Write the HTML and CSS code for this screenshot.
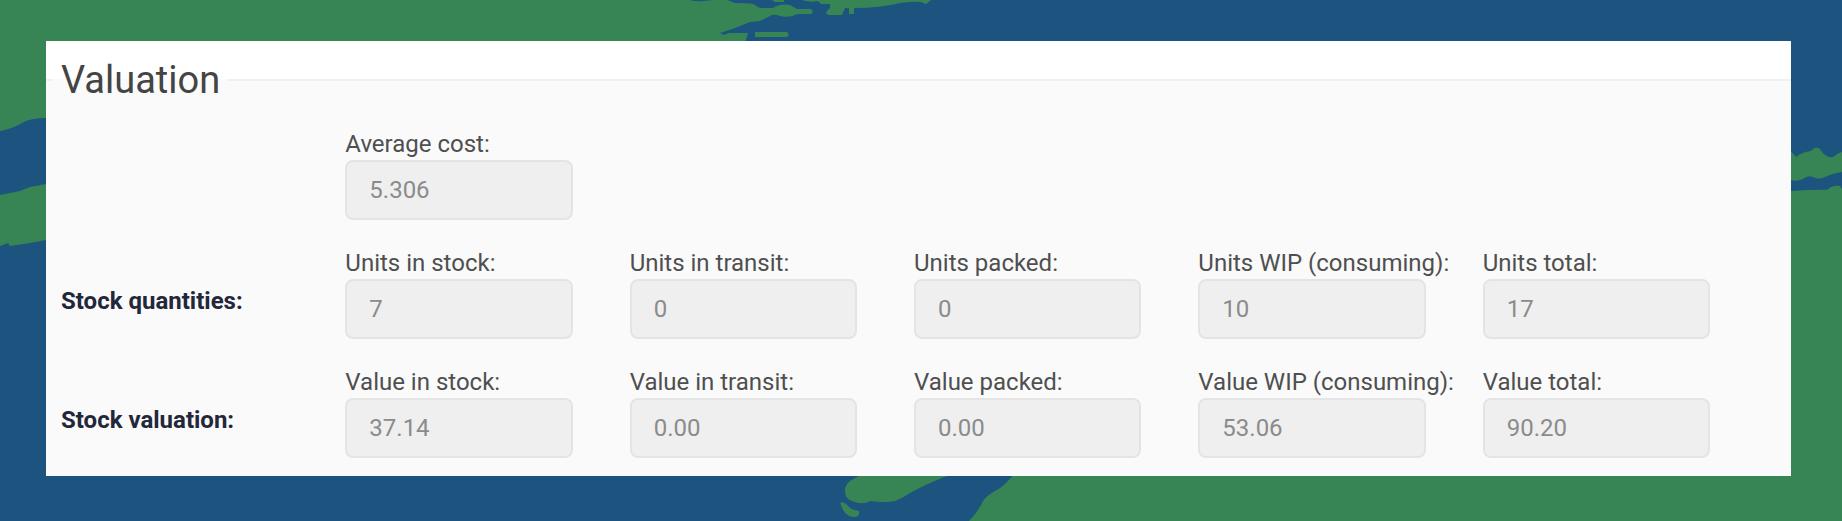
FILE: index.html
```html
<!DOCTYPE html>
<html lang="en">
<head>
<meta charset="utf-8">
<meta name="viewport" content="width=device-width, initial-scale=1">
<title>Valuation</title>
<link rel="stylesheet" href="styles.css">
</head>
<body>
<svg class="backdrop" viewBox="0 0 1842 521" preserveAspectRatio="none" aria-hidden="true">
  <path d="M0 0H690Q697 2 703 1L713 0H727L735 3Q748 3 753 4L760 8H773Q780 3 790 5L797 9H811Q814 12 811 14H798Q790 18 780 16Q775 14 772 15L760 21L750 22L735 28L720 33L724 35L729 33H748L745 43H46V118Q34 118 26 121Q12 129 0 131Z"/>
  <path d="M755 32H787Q790 35 787 37H755ZM772 0H784V2H775ZM802 0Q810 3 818 1L821 4H830V8L826 12Q826 15 830 15H842L845 8H849V14H854V8Q880 8 900 3Q915 1 921 2L926 4L931 0Z"/>
  <path d="M0 195L20 191L30 187L46 184V240L30 243L10 246L8 243L0 246Z"/>
  <path d="M862 474L850 481Q845 485 845 490Q845 498 850 500Q862 506 870 501Q885 503 895 501Q903 498 910 493Q930 482 950 475ZM840 503Q843 501 846 504L850 508Q855 511 859 511Q860 517 854 517Q847 517 843 510Z"/>
  <path d="M1014 474Q1006 484 1000 488Q987 495 983 501Q978 512 969 521H1842V190Q1818 189 1791 191V400L1780 474Z"/>
  <path d="M1790 150L1796 157Q1802 152 1811 151Q1816 145 1820 149Q1826 159 1833 157Q1838 153 1842 152V172Q1833 173 1825 177Q1819 180 1813 177Q1808 175 1803 179Q1797 182 1790 180ZM1827 190Q1832 185 1840 186L1842 189V191Z"/>
</svg>
<main class="page">
  <form class="panel">
    <fieldset class="valuation">
      <legend class="title">Valuation</legend>
      <div class="row">
        <div class="field field-first"><label for="avg">Average cost:</label><input id="avg" type="text" value="5.306" disabled></div>
      </div>
      <div class="row" role="group" aria-labelledby="quantities">
        <div class="row-title" id="quantities">Stock quantities:</div>
        <div class="field"><label for="us">Units in stock:</label><input id="us" type="text" value="7" disabled></div>
        <div class="field"><label for="ut">Units in transit:</label><input id="ut" type="text" value="0" disabled></div>
        <div class="field"><label for="up">Units packed:</label><input id="up" type="text" value="0" disabled></div>
        <div class="field"><label for="uw">Units WIP (consuming):</label><input id="uw" type="text" value="10" disabled></div>
        <div class="field"><label for="uu">Units total:</label><input id="uu" type="text" value="17" disabled></div>
      </div>
      <div class="row" role="group" aria-labelledby="values">
        <div class="row-title" id="values">Stock valuation:</div>
        <div class="field"><label for="vs">Value in stock:</label><input id="vs" type="text" value="37.14" disabled></div>
        <div class="field"><label for="vt">Value in transit:</label><input id="vt" type="text" value="0.00" disabled></div>
        <div class="field"><label for="vp">Value packed:</label><input id="vp" type="text" value="0.00" disabled></div>
        <div class="field"><label for="vw">Value WIP (consuming):</label><input id="vw" type="text" value="53.06" disabled></div>
        <div class="field"><label for="vv">Value total:</label><input id="vv" type="text" value="90.20" disabled></div>
      </div>
    </fieldset>
  </form>
</main>
</body>
</html>
```
FILE: styles.css
```css
* { box-sizing: border-box; }

body {
  margin: 0;
  background: #1d547f;
  color: #4f4f4f;
  font: 24px/32px Roboto, sans-serif;
}

.backdrop {
  position: fixed;
  inset: 0;
  z-index: -1;
  width: 100%;
  height: 100%;
  fill: #378555;
}

.page { padding: 41px 51px 45px 46px; }

.panel {
  padding-top: 15px;
  background: #fff;
}

.valuation {
  display: flex;
  flex-direction: column;
  gap: 27px;
  min-width: 0;
  margin: 0;
  padding: 24px 24px 18px 15px;
  border: 0;
  border-top: 2px solid #f0f0f0;
  background: #fafafa;
}

.title {
  margin-left: -8px;
  padding: 0 8px;
  color: #444;
  font-size: 38px;
  line-height: 48px;
}

.row {
  display: grid;
  grid-template-columns: repeat(6, minmax(0, 1fr));
  align-items: center;
}

.row-title {
  padding-top: 16px;
  color: #23273a;
  font-weight: 700;
}

.field-first { grid-column-start: 2; }

.field label {
  display: block;
  white-space: nowrap;
}

.field input {
  display: block;
  width: 80%;
  height: 60px;
  padding: 0 22px;
  border: 2px solid #e4e4e4;
  border-radius: 8px;
  background: #efefef;
  color: #8b8b8b;
  font: inherit;
}
```
